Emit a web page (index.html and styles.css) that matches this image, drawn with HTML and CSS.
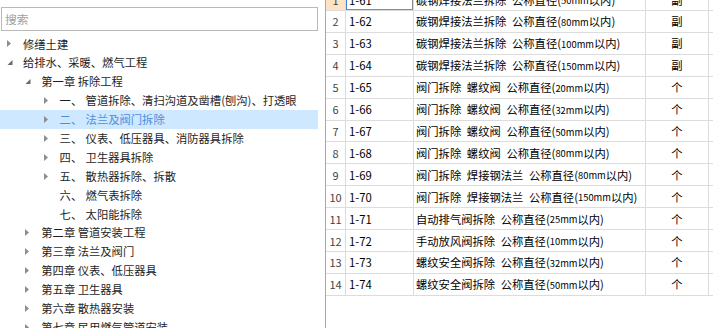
FILE: index.html
```html
<!DOCTYPE html>
<html lang="zh-CN">
<head>
<meta charset="utf-8">
<title>定额章节</title>
<link rel="stylesheet" href="styles.css">
</head>
<body>
<div class="app">
  <aside class="side">
    <div class="search">搜索</div>
    <ul class="tree">
      <li class="node l0"><svg class="tw" viewBox="0 0 22 19"><polygon class="col" points="6,6 10,9.5 6,13"/></svg><span>修缮土建</span></li>
      <li class="node l0"><svg class="tw" viewBox="0 0 22 19"><polygon class="exp" points="11.5,7 11.5,12 6.5,12"/></svg><span>给排水、采暖、燃气工程</span></li>
      <li class="node l1"><svg class="tw" viewBox="0 0 22 19"><polygon class="exp" points="11.5,7 11.5,12 6.5,12"/></svg><span>第一章 拆除工程</span></li>
      <li class="node l2"><svg class="tw" viewBox="0 0 22 19"><polygon class="col" points="6,6 10,9.5 6,13"/></svg><span class="num">一、</span><span>管道拆除、清扫沟道及凿槽(刨沟)、打透眼</span></li>
      <li class="node l2 sel"><svg class="tw" viewBox="0 0 22 19"><polygon class="col" points="6,6 10,9.5 6,13"/></svg><span class="num">二、</span><span>法兰及阀门拆除</span></li>
      <li class="node l2"><svg class="tw" viewBox="0 0 22 19"><polygon class="col" points="6,6 10,9.5 6,13"/></svg><span class="num">三、</span><span>仪表、低压器具、消防器具拆除</span></li>
      <li class="node l2"><svg class="tw" viewBox="0 0 22 19"><polygon class="col" points="6,6 10,9.5 6,13"/></svg><span class="num">四、</span><span>卫生器具拆除</span></li>
      <li class="node l2"><svg class="tw" viewBox="0 0 22 19"><polygon class="col" points="6,6 10,9.5 6,13"/></svg><span class="num">五、</span><span>散热器拆除、拆散</span></li>
      <li class="node l2"><svg class="tw" viewBox="0 0 22 19"></svg><span class="num">六、</span><span>燃气表拆除</span></li>
      <li class="node l2"><svg class="tw" viewBox="0 0 22 19"></svg><span class="num">七、</span><span>太阳能拆除</span></li>
      <li class="node l1"><svg class="tw" viewBox="0 0 22 19"><polygon class="col" points="6,6 10,9.5 6,13"/></svg><span>第二章 管道安装工程</span></li>
      <li class="node l1"><svg class="tw" viewBox="0 0 22 19"><polygon class="col" points="6,6 10,9.5 6,13"/></svg><span>第三章 法兰及阀门</span></li>
      <li class="node l1"><svg class="tw" viewBox="0 0 22 19"><polygon class="col" points="6,6 10,9.5 6,13"/></svg><span>第四章 仪表、低压器具</span></li>
      <li class="node l1"><svg class="tw" viewBox="0 0 22 19"><polygon class="col" points="6,6 10,9.5 6,13"/></svg><span>第五章 卫生器具</span></li>
      <li class="node l1"><svg class="tw" viewBox="0 0 22 19"><polygon class="col" points="6,6 10,9.5 6,13"/></svg><span>第六章 散热器安装</span></li>
      <li class="node l1"><svg class="tw" viewBox="0 0 22 19"><polygon class="col" points="6,6 10,9.5 6,13"/></svg><span>第七章 民用燃气管道安装</span></li>
    </ul>
  </aside>
  <main class="grid">
    <div class="rows">
      <div class="row cur"><div class="c no">1</div><div class="c code">1-61</div><div class="c name">碳钢焊接法兰拆除&ensp;公称直径(<span class="sz">50mm</span>以内)</div><div class="c unit">副</div><div class="c rest"></div></div>
      <div class="row"><div class="c no">2</div><div class="c code">1-62</div><div class="c name">碳钢焊接法兰拆除&ensp;公称直径(<span class="sz">80mm</span>以内)</div><div class="c unit">副</div><div class="c rest"></div></div>
      <div class="row"><div class="c no">3</div><div class="c code">1-63</div><div class="c name">碳钢焊接法兰拆除&ensp;公称直径(<span class="sz">100mm</span>以内)</div><div class="c unit">副</div><div class="c rest"></div></div>
      <div class="row"><div class="c no">4</div><div class="c code">1-64</div><div class="c name">碳钢焊接法兰拆除&ensp;公称直径(<span class="sz">150mm</span>以内)</div><div class="c unit">副</div><div class="c rest"></div></div>
      <div class="row"><div class="c no">5</div><div class="c code">1-65</div><div class="c name">阀门拆除&ensp;螺纹阀&ensp;公称直径(<span class="sz">20mm</span>以内)</div><div class="c unit">个</div><div class="c rest"></div></div>
      <div class="row"><div class="c no">6</div><div class="c code">1-66</div><div class="c name">阀门拆除&ensp;螺纹阀&ensp;公称直径(<span class="sz">32mm</span>以内)</div><div class="c unit">个</div><div class="c rest"></div></div>
      <div class="row"><div class="c no">7</div><div class="c code">1-67</div><div class="c name">阀门拆除&ensp;螺纹阀&ensp;公称直径(<span class="sz">50mm</span>以内)</div><div class="c unit">个</div><div class="c rest"></div></div>
      <div class="row"><div class="c no">8</div><div class="c code">1-68</div><div class="c name">阀门拆除&ensp;螺纹阀&ensp;公称直径(<span class="sz">80mm</span>以内)</div><div class="c unit">个</div><div class="c rest"></div></div>
      <div class="row"><div class="c no">9</div><div class="c code">1-69</div><div class="c name">阀门拆除&ensp;焊接钢法兰&ensp;公称直径(<span class="sz">80mm</span>以内)</div><div class="c unit">个</div><div class="c rest"></div></div>
      <div class="row"><div class="c no">10</div><div class="c code">1-70</div><div class="c name">阀门拆除&ensp;焊接钢法兰&ensp;公称直径(<span class="sz">150mm</span>以内)</div><div class="c unit">个</div><div class="c rest"></div></div>
      <div class="row"><div class="c no">11</div><div class="c code">1-71</div><div class="c name">自动排气阀拆除&ensp;公称直径(<span class="sz">25mm</span>以内)</div><div class="c unit">个</div><div class="c rest"></div></div>
      <div class="row"><div class="c no">12</div><div class="c code">1-72</div><div class="c name">手动放风阀拆除&ensp;公称直径(<span class="sz">10mm</span>以内)</div><div class="c unit">个</div><div class="c rest"></div></div>
      <div class="row"><div class="c no">13</div><div class="c code">1-73</div><div class="c name">螺纹安全阀拆除&ensp;公称直径(<span class="sz">32mm</span>以内)</div><div class="c unit">个</div><div class="c rest"></div></div>
      <div class="row"><div class="c no">14</div><div class="c code">1-74</div><div class="c name">螺纹安全阀拆除&ensp;公称直径(<span class="sz">50mm</span>以内)</div><div class="c unit">个</div><div class="c rest"></div></div>
    </div>
  </main>
</div>
</body>
</html>
```

FILE: styles.css
```css
* { box-sizing: border-box; }
html, body {
  margin: 0;
  padding: 0;
  background: #fff;
  overflow: hidden;
}
body {
  width: 713px;
  height: 328px;
  font-family: "Noto Sans CJK SC", "Noto Sans", sans-serif;
  font-size: 11.3px;
  color: #1e1e1e;
}
.app {
  display: flex;
  height: 328px;
}
.side {
  width: 325px;
  flex: none;
  padding: 7px 7px 0 1px;
  overflow: hidden;
}
.search {
  height: 23.5px;
  border: 1px solid #b9b9b9;
  color: #a0a0a0;
  padding-left: 3px;
  line-height: 21.5px;
  font-size: 11.8px;
}
.tree {
  list-style: none;
  margin: 4px 0 0 -1px;
  padding: 0;
}
.node {
  display: flex;
  align-items: center;
  height: 18.9px;
  line-height: 18.9px;
  white-space: nowrap;
}
.node.l0 { padding-left: 1px; }
.node.l1 { padding-left: 19.3px; }
.node.l2 { padding-left: 37.6px; }
.tw {
  width: 22px;
  height: 19px;
  flex: none;
}
.tw .col { fill: #8e8e8e; }
.tw .exp { fill: #6a6a6a; }
.num {
  display: inline-block;
  width: 26px;
}
.sel {
  background: #cde8ff;
  color: #4a8fdc;
}
.grid {
  flex: 1;
  border-left: 1px solid #a8a8a8;
  overflow: hidden;
}
.rows {
  margin-top: -10.9px;
}
.row {
  display: grid;
  grid-template-columns: 20px 68px 232px 63px 1fr;
  height: 21.92px;
  border-bottom: 1px solid #dcdcdc;
}
.c {
  border-right: 1px solid #dcdcdc;
  display: flex;
  align-items: center;
  white-space: nowrap;
  overflow: hidden;
  color: #000;
}
.no {
  justify-content: center;
  color: #444;
  font-size: 11px;
}
.code { padding-left: 3px; }
.name { padding-left: 2px; }
.sz {
  font-size: 9.4px;
  margin-top: 1px;
}
.unit { justify-content: center; }
.rest { border-right: none; }
.cur .no { background: #fde3c4; }
.cur .code {
  box-shadow: inset 1px 0 0 #3c86da, inset -1px -1px 0 #8a8a8a;
}
```
